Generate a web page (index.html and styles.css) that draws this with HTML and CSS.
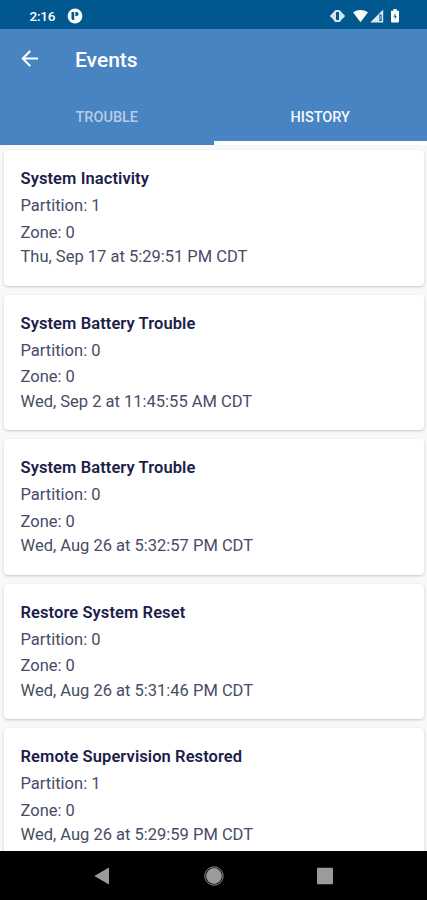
FILE: index.html
```html
<!DOCTYPE html>
<html lang="en">
<head>
<meta charset="utf-8">
<title>Events</title>
<link rel="stylesheet" href="styles.css">
</head>
<body>
<div class="screen">
  <header class="status-bar">
    <span class="clock">2:16</span>
    <svg class="notice" width="16" height="16" viewBox="0 0 16 16"><circle cx="8" cy="8" r="7.4" fill="#fff"/><path d="M4.5 4.1H7.2V12.1H5.6Q4.5 11.5 4.5 10ZM8.4 4.1H9.6Q11.6 4.3 11.6 6.1T9.6 8.1H8.4Z" fill="#00588f"/></svg>
    <svg class="signals" width="72" height="18" viewBox="0 0 72 18"><path d="M.8 9L5 4.800V13.200ZM16.200 9L12 4.800V13.200Z" fill="#d5e5ef"/><rect x="5.900" y="4" width="5.200" height="10" rx="1.800" fill="#00588f" stroke="#d5e5ef" stroke-width="2.200"/><path d="M24 5.300Q31.500 .600 39 5.300L31.500 15.200Z" fill="#fff"/><path d="M54.200 2.500V15.500H41.200Z" fill="#dbe8f1"/><path d="M50.300 7.500H52.600V14H50.300Z" fill="#00588f"/><path d="M51.200 8.600V13" stroke="#dbe8f1" stroke-width=".7"/><path d="M62 3.700H64.300V2H67.700V3.700H70V14.500Q70 15.500 69 15.500H63Q62 15.500 62 14.500Z" fill="#fff"/><path d="M66.500 6L64.300 9.800H65.700V12.800L67.900 9H66.500Z" fill="#316e9d"/></svg>
  </header>
  <div class="app-bar">
    <svg class="back" width="20" height="20" viewBox="0 0 20 20"><path d="M18 9.500H3M10.200 2L2.700 9.500L10.200 17" fill="none" stroke="#fff" stroke-width="2"/></svg>
    <h1>Events</h1>
  </div>
  <nav class="tabs"><div class="tab">TROUBLE</div><div class="tab active">HISTORY</div></nav>
  <main class="list">
    <article class="card"><h2>System Inactivity</h2><p>Partition: 1</p><p>Zone: 0</p><p class="date">Thu, Sep 17 at 5:29:51 PM CDT</p></article>
    <article class="card"><h2>System Battery Trouble</h2><p>Partition: 0</p><p>Zone: 0</p><p class="date">Wed, Sep 2 at 11:45:55 AM CDT</p></article>
    <article class="card"><h2>System Battery Trouble</h2><p>Partition: 0</p><p>Zone: 0</p><p class="date">Wed, Aug 26 at 5:32:57 PM CDT</p></article>
    <article class="card"><h2>Restore System Reset</h2><p>Partition: 0</p><p>Zone: 0</p><p class="date">Wed, Aug 26 at 5:31:46 PM CDT</p></article>
    <article class="card"><h2>Remote Supervision Restored</h2><p>Partition: 1</p><p>Zone: 0</p><p class="date">Wed, Aug 26 at 5:29:59 PM CDT</p></article>
  </main>
  <footer class="nav-bar">
    <svg width="20" height="20" viewBox="0 0 20 20"><path d="M2.300 10L17 1.500V18.500Z" fill="#9b9b9b"/></svg>
    <svg width="20" height="20" viewBox="0 0 20 20"><circle cx="10" cy="10" r="9.200" fill="none" stroke="#8c8c8c"/><circle cx="10" cy="10" r="7.900" fill="#9b9b9b"/></svg>
    <svg width="20" height="20" viewBox="0 0 20 20"><rect x="2" y="1.800" width="16" height="16.500" rx="1" fill="#9b9b9b"/></svg>
  </footer>
</div>
</body>
</html>
```
FILE: styles.css
```css
* { box-sizing: border-box; }
body, h1, h2, p { margin: 0; }
body { font-family: Roboto, sans-serif; background: #f8f8f8; }
svg { display: block; flex: none; }
.screen { display: flex; flex-direction: column; height: 900px; overflow: hidden; }
.status-bar { flex: none; display: flex; align-items: center; height: 29px; padding: 3px 26px 0 29.5px; background: #00588f; color: #fff; }
.clock { width: 37px; font-size: 13.5px; font-weight: 500; line-height: 20px; letter-spacing: -.25px; }
.signals { margin-left: auto; }
.app-bar { flex: none; display: flex; align-items: center; height: 60px; padding-left: 20px; background: #4883c2; color: #fff; }
.back { margin-right: 35px; }
h1 { font-size: 21px; font-weight: 500; line-height: 28px; padding-top: 1px; }
.tabs { flex: none; display: flex; height: 56px; background: #4883c2; }
.tab { flex: 1; padding-top: 19px; text-align: center; font-size: 14.5px; font-weight: 500; line-height: 20px; color: #b5cde6; }
.tab.active { color: #f4f9ff; border-bottom: 4px solid #fff; }
.list { flex: 1; min-height: 0; overflow: hidden; display: flex; flex-direction: column; gap: 9px; padding: 5px 3px 0 4px; background: #f8f8f8; }
.card { flex: none; height: 135.5px; padding: 16px 16.5px; border-radius: 4px; background: #fff; box-shadow: 0 1px 2.5px rgba(0, 0, 0, .2); color: #494b65; }
h2 { margin-bottom: 1px; font-size: 16.5px; font-weight: 600; line-height: 26px; letter-spacing: .08px; color: #1c1d49; }
p { font-size: 16.5px; line-height: 26.5px; white-space: nowrap; }
.date { line-height: 22.4px; }
.nav-bar { flex: none; display: flex; align-items: center; justify-content: space-between; height: 49px; padding: 0 92px; background: #000; }
```
